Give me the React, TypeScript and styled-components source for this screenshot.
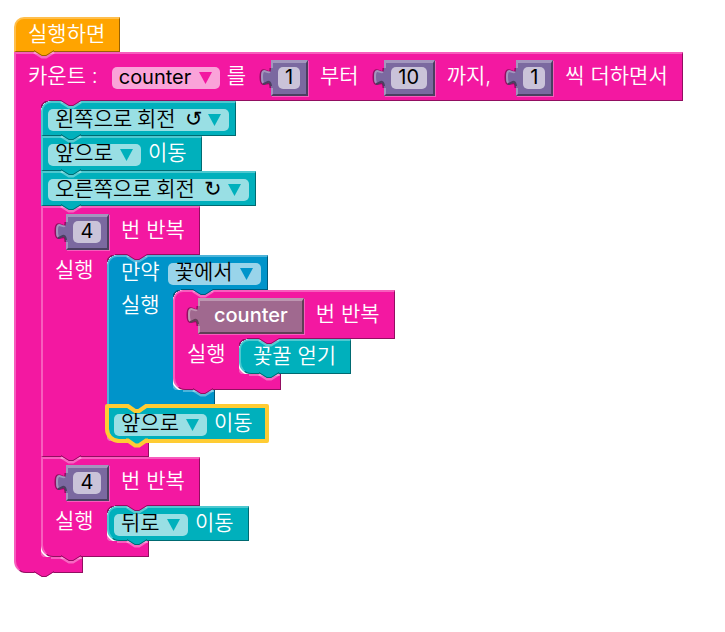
import React, { ReactNode } from 'react';
import styled, { createGlobalStyle } from 'styled-components';

type Tone = { base: string; light: string; dark: string; field: string };

const tones: Record<string, Tone> = {
  event: { base: '#ffa400', light: '#ffbf4d', dark: '#996200', field: '#ffdb99' },
  loop: { base: '#f318a1', light: '#f75dbd', dark: '#920e61', field: '#faa3d9' },
  action: { base: '#00b0bc', light: '#4dc8d0', dark: '#006a71', field: '#99dfe4' },
  logic: { base: '#0094ca', light: '#4db4da', dark: '#005979', field: '#99d4ea' },
  number: { base: '#7b69a0', light: '#a396bd', dark: '#4a3f60', field: '#cac3d9' },
  variable: { base: '#a0698f', light: '#bd96b1', dark: '#603f56', field: '#d9c3d2' },
};

const SELECTED = '#ffcc33';

const GlobalStyle = createGlobalStyle`
  *, *::before, *::after { box-sizing: border-box; }
  body { margin: 0; background: #fff; }
`;

const Workspace = styled.main`
  display: flex;
  flex-direction: column;
  align-items: flex-start;
  padding: 17px 14px;
  color: #fff;
  font: 400 20px/26px Inter, 'Noto Sans CJK KR', 'DejaVu Sans', sans-serif;
  white-space: nowrap;
`;

type Part = { $tone: Tone; $first?: boolean; $last?: boolean };

const Statement = styled.div<Part>`
  position: relative;
  display: flex;
  align-items: center;
  width: fit-content;
  height: 35px;
  padding: 0 6px 0 5px;
  background: ${p => p.$tone.base};
  border: solid;
  border-width: 2px 1px 1px 2px;
  border-color: ${p => `${p.$tone.light} ${p.$tone.dark} ${p.$tone.dark} ${p.$tone.light}`};
  border-top-left-radius: ${p => (p.$first ? 10 : 0)}px;
  border-bottom-left-radius: ${p => (p.$last ? 12 : 0)}px;
`;

const Group = styled.div`
  position: relative;
  width: fit-content;
`;

const Header = styled.div<Part & { $arm: number; $tall: boolean }>`
  position: relative;
  display: flex;
  align-items: center;
  width: fit-content;
  height: ${p => (p.$tall ? 49 : 35)}px;
  padding: 0 6px 0 5px;
  background: ${p => p.$tone.base};
  border: solid;
  border-width: 2px 1px 0 2px;
  border-color: ${p => `${p.$tone.light} ${p.$tone.dark} ${p.$tone.dark} ${p.$tone.light}`};
  border-top-left-radius: ${p => (p.$first ? 10 : 0)}px;

  &::after {
    content: '';
    position: absolute;
    right: 0;
    bottom: 0;
    left: ${p => p.$arm + 6}px;
    height: 1px;
    background: ${p => p.$tone.dark};
  }
`;

const Middle = styled.div`
  display: flex;
`;

const Arm = styled.div<{ $tone: Tone; $width: number }>`
  flex: none;
  width: ${p => p.$width}px;
  padding: 2px 0 0 5px;
  background: ${p => p.$tone.base};
  border-left: 2px solid ${p => p.$tone.light};
`;

const Mouth = styled.div<{ $tone: Tone }>`
  background:
    radial-gradient(circle at 10px 10px, transparent 10px, ${p => p.$tone.dark} 10px 11px, ${p => p.$tone.base} 12px)
      left top / 10px 10px no-repeat,
    radial-gradient(circle at 12px 0, transparent 11px, #fff 12px 13px, ${p => p.$tone.light} 14px 15px, ${p => p.$tone.base} 16px)
      left bottom / 12px 12px no-repeat;
`;

const Footer = styled.div<Part & { $arm: number }>`
  position: relative;
  width: ${p => p.$arm + 42}px;
  height: 16px;
  background: ${p => p.$tone.base};
  border: solid;
  border-width: 0 1px 1px 2px;
  border-color: ${p => `${p.$tone.light} ${p.$tone.dark} ${p.$tone.dark} ${p.$tone.light}`};
  border-bottom-left-radius: ${p => (p.$last ? 12 : 0)}px;

  &::before {
    content: '';
    position: absolute;
    top: 0;
    right: 0;
    left: ${p => p.$arm + 8}px;
    height: 2px;
    background: ${p => p.$tone.light};
  }
`;

const TabSvg = styled.svg<{ $left: number; $raised?: boolean }>`
  position: absolute;
  left: ${p => p.$left}px;
  bottom: -9px;
  z-index: ${p => (p.$raised ? 3 : 1)};
  overflow: visible;
  pointer-events: none;
`;

const NotchSvg = styled.svg`
  position: absolute;
  top: -4px;
  left: 18px;
  z-index: 3;
  overflow: visible;
  pointer-events: none;
`;

const Outline = styled.span`
  position: absolute;
  inset: -4px -2px -3px -4px;
  z-index: 2;
  border: 4px solid ${SELECTED};
  border-radius: 2px 2px 2px 14px;
  pointer-events: none;
`;

function Tab({ tone, left = 18, selected }: { tone: Tone; left?: number; selected?: boolean }) {
  return (
    <TabSvg $left={left} $raised={selected} width="20" height="10" viewBox="0 0 20 10" aria-hidden="true">
      {selected ? (
        <>
          <path d="M0-2V1L8 6H12L20 1V-2Z" fill={tone.base} />
          <path d="M-1 1.5H1L8 6.5H12L19 1.5H21" fill="none" stroke={SELECTED} strokeWidth="4" />
        </>
      ) : (
        <>
          <path d="M0 2L8 7H12L20 2" fill="none" stroke="#fff" strokeOpacity=".35" strokeWidth="3" />
          <path d="M0-1V1L8 6H12L20 1V-1Z" fill={tone.base} />
          <path d="M0 .5L8 5.5H12L20 .5" fill="none" stroke={tone.dark} strokeWidth="1" />
        </>
      )}
    </TabSvg>
  );
}

const Label = styled.span`
  margin: 0 8px 3px 7px;
  font-size: 21px;
  font-weight: 350;
`;

const Word = styled.span`
  margin: 0 14px 3px;
  font-weight: 500;
`;

const FieldBox = styled.span<{ $tone: Tone }>`
  position: relative;
  display: flex;
  height: 22px;
  margin-top: 1px;
  border-radius: 5px;
  background: ${p => p.$tone.field};
`;

const Select = styled.select`
  appearance: none;
  height: 30px;
  margin: -6px 0 0;
  padding: 0 28px 0 7px;
  border: 0;
  background: transparent;
  color: #000;
  font: inherit;
  font-size: 21px;
  font-weight: 350;
  line-height: 30px;
`;

const LatinSelect = styled(Select)`
  margin-top: -5px;
  font-size: 20px;
  font-weight: 400;
`;

const SymbolSelect = styled(Select)`
  margin-top: -7px;
  padding-right: 26px;
  font-family: 'Noto Sans CJK KR', 'DejaVu Sans', sans-serif;
`;

const controls = { plain: Select, latin: LatinSelect, symbol: SymbolSelect };

const Caret = styled.svg`
  position: absolute;
  top: 5px;
  right: 8px;
  pointer-events: none;
`;

type DropdownProps = { tone: Tone; name: string; options: string[]; kind?: keyof typeof controls };

function Dropdown({ tone, name, options, kind = 'plain' }: DropdownProps) {
  const Control = controls[kind];
  return (
    <FieldBox $tone={tone}>
      <Control aria-label={name} defaultValue={options[0]}>
        {options.map(o => (
          <option key={o} value={o}>
            {o}
          </option>
        ))}
      </Control>
      <Caret width="13" height="12" viewBox="0 0 13 12" aria-hidden="true">
        <path d="M0 0H13L6.5 12Z" fill={tone.base} />
      </Caret>
    </FieldBox>
  );
}

const ValueBox = styled.span<{ $tone: Tone }>`
  position: relative;
  display: flex;
  align-items: center;
  height: 36px;
  margin: 0 5px 0 18px;
  background: ${p => p.$tone.base};
  border: solid;
  border-width: 3px 2px 2px;
  border-color: ${p => `${p.$tone.light} ${p.$tone.dark} ${p.$tone.dark} ${p.$tone.light}`};
  box-shadow: 1px 1px 0 ${tones.loop.light};

  ${Label} + & {
    margin-left: 17px;
  }
`;

const NubSvg = styled.svg`
  position: absolute;
  top: 3px;
  left: -14px;
  overflow: visible;
`;

function Value({ tone, children }: { tone: Tone; children: ReactNode }) {
  const curve = 'M12 2C12 14 2-4 2 11S12 9 12 22';
  return (
    <ValueBox $tone={tone}>
      <NubSvg width="14" height="24" viewBox="0 0 14 24" aria-hidden="true">
        <path d={curve} fill="none" stroke={tones.loop.dark} strokeWidth="3" />
        <path d={`${curve}H15V2Z`} fill={tone.base} />
        <path d="M11 6C8 8 3 0 3 11Q3 15 4 17" fill="none" stroke={tone.light} strokeWidth="2" />
        <path d="M4 18C7 18 11 12 12 20" fill="none" stroke={tone.dark} strokeWidth="2" />
      </NubSvg>
      {children}
    </ValueBox>
  );
}

const widths = { narrow: 22, medium: 28, wide: 36 };

const NumberInput = styled.input<{ $size: keyof typeof widths }>`
  width: ${p => widths[p.$size]}px;
  height: 22px;
  margin: 0 6px 0 5px;
  padding: 0 0 3px;
  border: 0;
  border-radius: 5px;
  background: ${tones.number.field};
  color: #000;
  font: inherit;
  line-height: 19px;
  text-align: center;
`;

function NumberValue({ name, value, size }: { name: string; value: string; size: keyof typeof widths }) {
  return (
    <Value tone={tones.number}>
      <NumberInput aria-label={name} defaultValue={value} $size={size} />
    </Value>
  );
}

type BlockProps = {
  tone: Tone;
  first?: boolean;
  last?: boolean;
  selected?: boolean;
  above?: Tone;
  children: ReactNode;
};

function Block({ tone, first, last, selected, above, children }: BlockProps) {
  return (
    <Statement $tone={tone} $first={first} $last={last}>
      {children}
      {selected && above && (
        <>
          <Outline />
          <NotchSvg width="20" height="10" viewBox="0 0 20 10" aria-hidden="true">
            <path d="M0-1V2L8 7H12L20 2V-1Z" fill={above.base} />
            <path d="M-1 2H1L8 7H12L19 2H21" fill="none" stroke={SELECTED} strokeWidth="4" />
          </NotchSvg>
        </>
      )}
      <Tab tone={tone} selected={selected} />
    </Statement>
  );
}

type ContainerProps = {
  tone: Tone;
  first?: boolean;
  last?: boolean;
  tall?: boolean;
  head: ReactNode;
  label?: string;
  children: ReactNode;
};

function Container({ tone, first, last, tall = true, head, label, children }: ContainerProps) {
  const arm = label ? 66 : 27;
  return (
    <Group>
      <Header $tone={tone} $first={first} $arm={arm} $tall={tall}>
        {head}
        <Tab tone={tone} left={arm + 18} />
      </Header>
      <Middle>
        <Arm $tone={tone} $width={arm}>
          {label && <Label>{label}</Label>}
        </Arm>
        <Mouth $tone={tone}>{children}</Mouth>
      </Middle>
      <Footer $tone={tone} $last={last} $arm={arm}>
        <Tab tone={tone} />
      </Footer>
    </Group>
  );
}

export default function App() {
  const { event, loop, action, logic, variable } = tones;
  return (
    <>
      <GlobalStyle />
      <Workspace>
        <Block tone={event} first>
          <Label>실행하면</Label>
        </Block>
        <Container
          tone={loop}
          last
          head={
            <>
              <Label>카운트 :&nbsp;</Label>
              <Dropdown tone={loop} name="변수" options={['counter']} kind="latin" />
              <Label>를</Label>
              <NumberValue name="부터" value="1" size="narrow" />
              <Label>부터</Label>
              <NumberValue name="까지" value="10" size="wide" />
              <Label>까지,</Label>
              <NumberValue name="씩" value="1" size="narrow" />
              <Label>씩 더하면서</Label>
            </>
          }
        >
          <Block tone={action} first>
            <Dropdown tone={action} name="회전" options={['왼쪽으로 회전\u00a0\u00a0↺']} kind="symbol" />
          </Block>
          <Block tone={action}>
            <Dropdown tone={action} name="방향" options={['앞으로', '뒤로']} />
            <Label>이동</Label>
          </Block>
          <Block tone={action}>
            <Dropdown tone={action} name="회전" options={['오른쪽으로 회전\u00a0\u00a0↻']} kind="symbol" />
          </Block>
          <Container
            tone={loop}
            label="실행"
            head={
              <>
                <NumberValue name="반복 횟수" value="4" size="medium" />
                <Label>번 반복</Label>
              </>
            }
          >
            <Container
              tone={logic}
              first
              tall={false}
              label="실행"
              head={
                <>
                  <Label>만약</Label>
                  <Dropdown tone={logic} name="조건" options={['꽃에서']} />
                </>
              }
            >
              <Container
                tone={loop}
                first
                last
                label="실행"
                head={
                  <>
                    <Value tone={variable}>
                      <Word>counter</Word>
                    </Value>
                    <Label>번 반복</Label>
                  </>
                }
              >
                <Block tone={action} first last>
                  <Label>꽃꿀 얻기</Label>
                </Block>
              </Container>
            </Container>
            <Block tone={action} last selected above={logic}>
              <Dropdown tone={action} name="방향" options={['앞으로', '뒤로']} />
              <Label>이동</Label>
            </Block>
          </Container>
          <Container
            tone={loop}
            last
            label="실행"
            head={
              <>
                <NumberValue name="반복 횟수" value="4" size="medium" />
                <Label>번 반복</Label>
              </>
            }
          >
            <Block tone={action} first last>
              <Dropdown tone={action} name="방향" options={['뒤로']} />
              <Label>이동</Label>
            </Block>
          </Container>
        </Container>
      </Workspace>
    </>
  );
}
